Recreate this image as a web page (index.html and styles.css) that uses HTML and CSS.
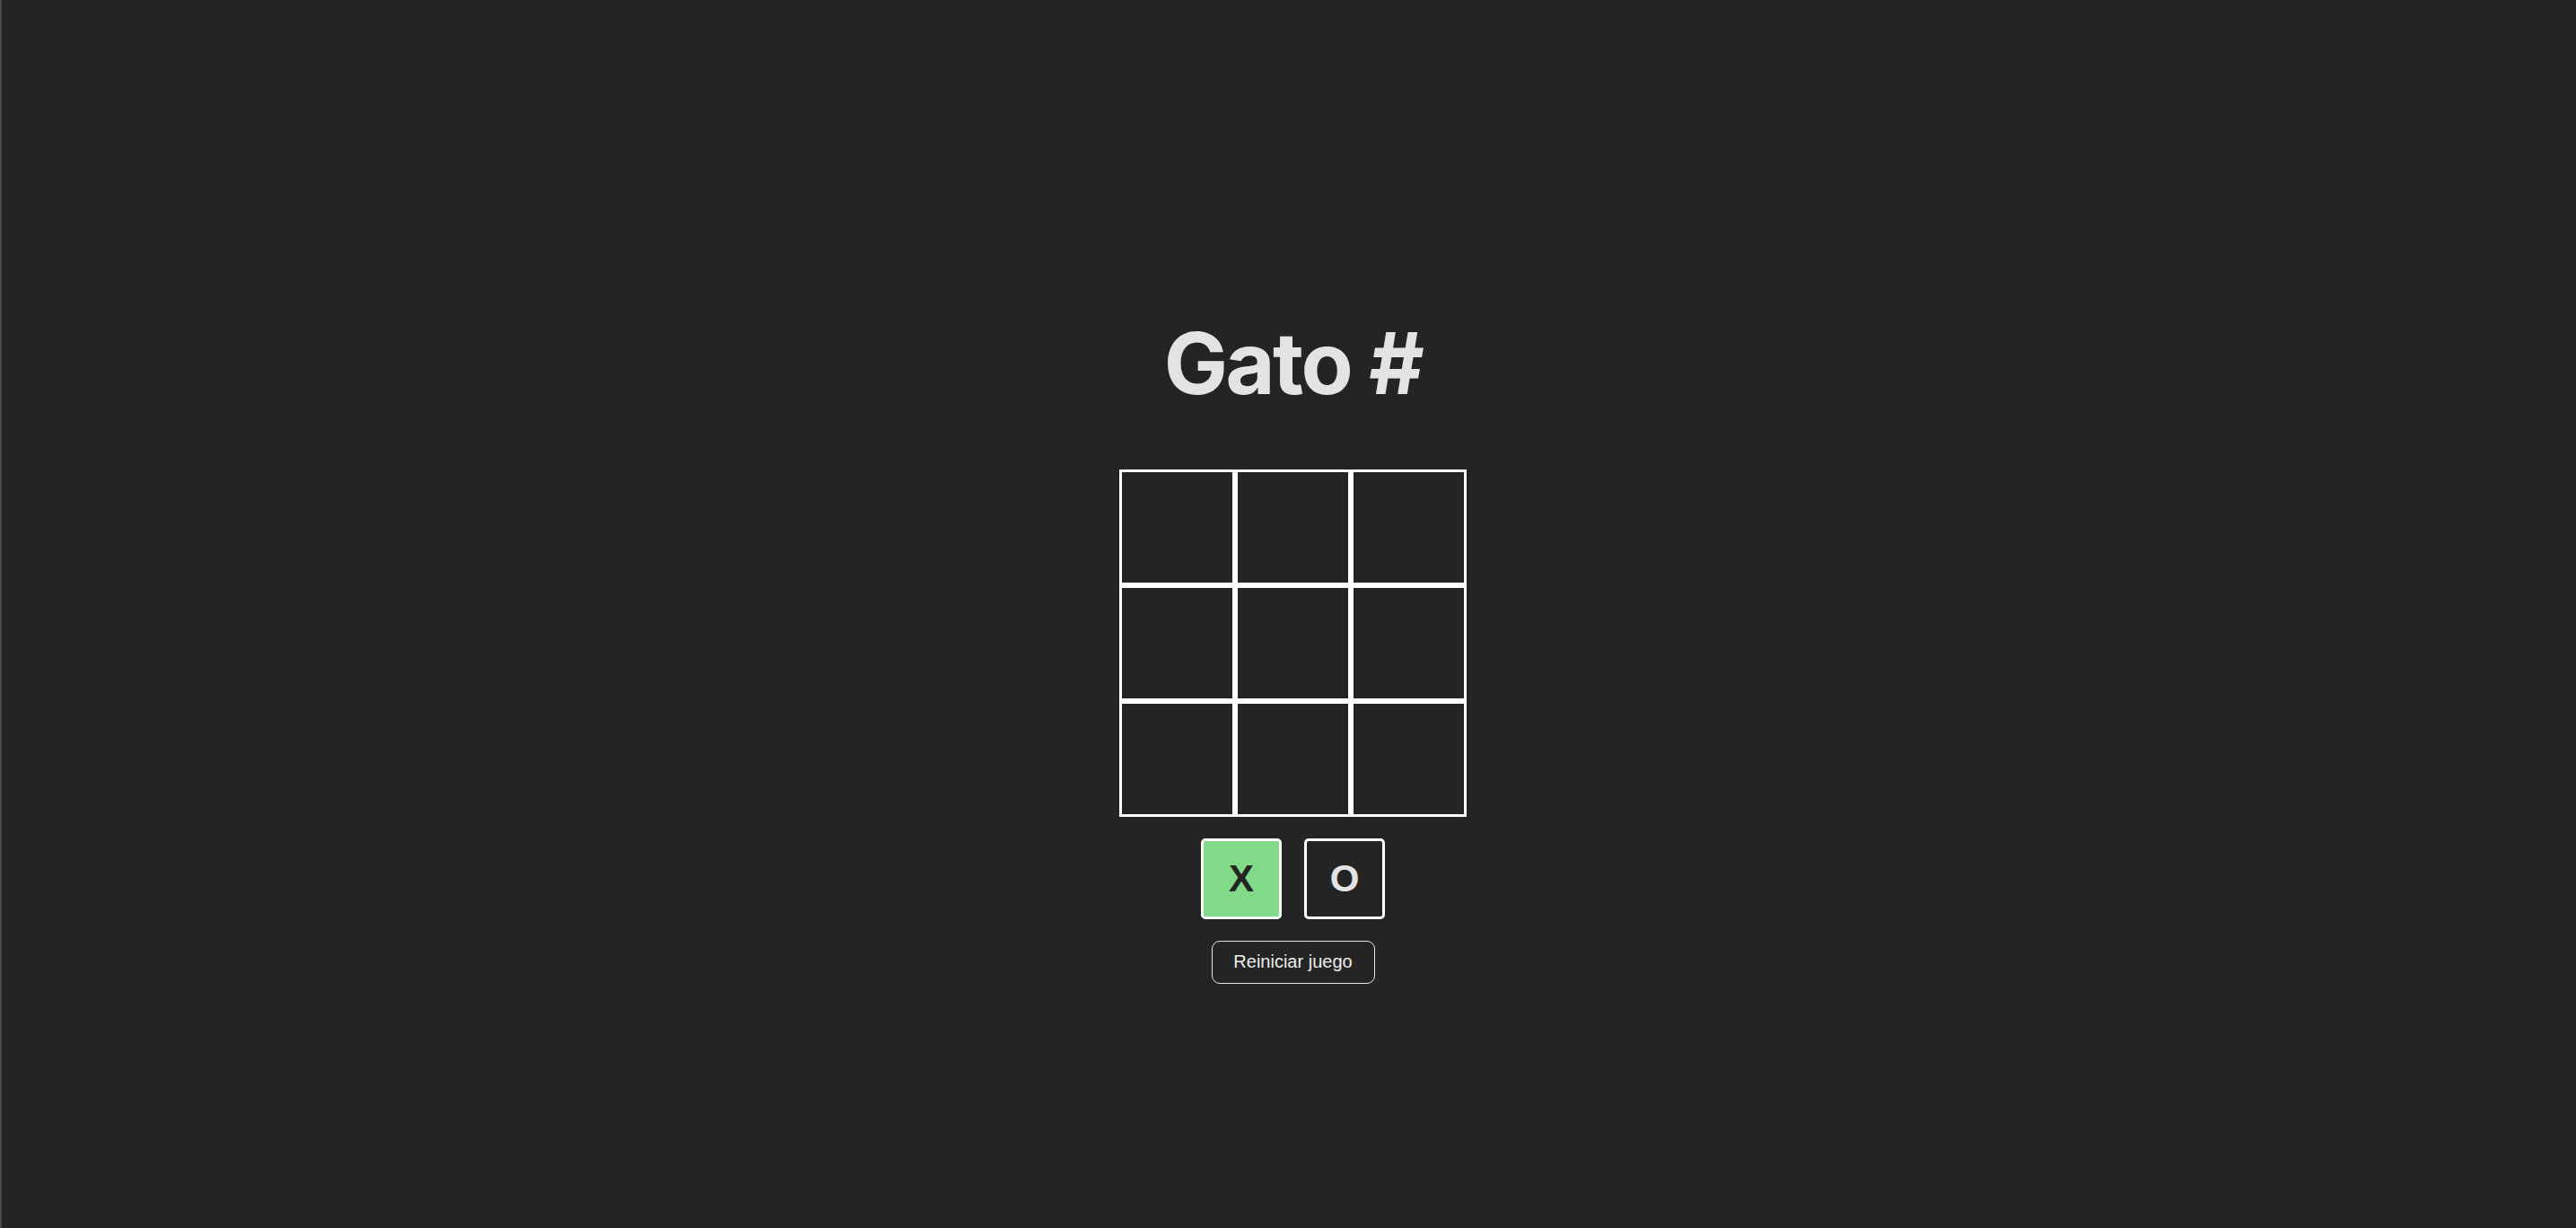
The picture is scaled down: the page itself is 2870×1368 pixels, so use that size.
FILE: index.html
```html
<!DOCTYPE html>
<html lang="es">
<head>
<meta charset="utf-8">
<title>Gato #</title>
<link rel="stylesheet" href="styles.css">
</head>
<body>
<main class="app">
  <h1 class="title">Gato #</h1>
  <section class="board">
    <div class="cell"></div>
    <div class="cell"></div>
    <div class="cell"></div>
    <div class="cell"></div>
    <div class="cell"></div>
    <div class="cell"></div>
    <div class="cell"></div>
    <div class="cell"></div>
    <div class="cell"></div>
  </section>
  <section class="turns">
    <div class="turn turn-active">X</div>
    <div class="turn">O</div>
  </section>
  <button class="reset">Reiniciar juego</button>
</main>
</body>
</html>
```

FILE: styles.css
```css
html, body {
  margin: 0;
  padding: 0;
}
body {
  background: #242424;
  color: rgba(255, 255, 255, 0.87);
  font-family: Inter, "Liberation Sans", sans-serif;
  min-height: 100vh;
  border-left: 2px solid #474747;
  box-sizing: border-box;
}
.app {
  display: flex;
  flex-direction: column;
  align-items: center;
  padding-top: 353px;
  padding-left: 9px;
}
.title {
  margin: 0;
  font-family: Inter, sans-serif;
  font-weight: 700;
  font-size: 95px;
  line-height: 1.1;
  letter-spacing: -2.5px;
  color: #e3e3e3;
}
.board {
  margin-top: 65px;
  display: grid;
  grid-template-columns: repeat(3, 129px);
  grid-template-rows: repeat(3, 129px);
}
.cell {
  border: 3px solid #ffffff;
  box-sizing: border-box;
}
.turns {
  margin-top: 24px;
  display: flex;
  gap: 25px;
}
.turn {
  width: 90px;
  height: 90px;
  box-sizing: border-box;
  border: 3px solid #ffffff;
  border-radius: 5px;
  display: flex;
  align-items: center;
  justify-content: center;
  font-family: "Liberation Sans", Arial, sans-serif;
  font-weight: 700;
  font-size: 42px;
  color: #e3e3e3;
}
.turn-active {
  background: #80da87;
  color: #242424;
}
.reset {
  margin-top: 24px;
  width: 182px;
  height: 48px;
  background: transparent;
  border: 1px solid #e6e6e6;
  border-radius: 9px;
  color: #ececec;
  font-family: "Liberation Sans", Arial, sans-serif;
  font-size: 20px;
  padding: 0;
  cursor: pointer;
}
```
